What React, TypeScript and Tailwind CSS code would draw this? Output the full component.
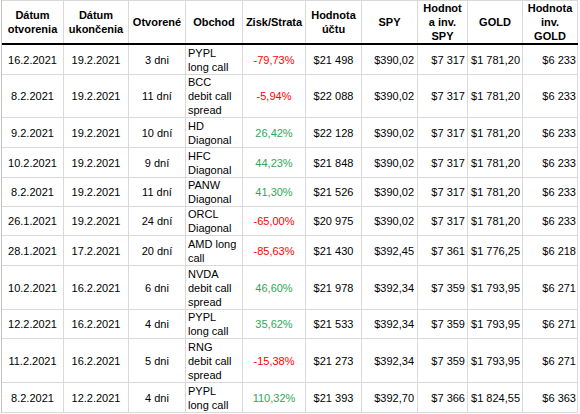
import React from "react"

type Row = {
  open: string
  close: string
  days: string
  trade: string[]
  pl: string
  account: string
  spy: string
  invSpy: string
  gold: string
  invGold: string
  h: string
}

// row heights measured off the sheet (border included)
const rows: Row[] = [
  { open: "16.2.2021", close: "19.2.2021", days: "3 dni", trade: ["PYPL", "long call"], pl: "-79,73%", account: "$21 498", spy: "$390,02", invSpy: "$7 317", gold: "$1 781,20", invGold: "$6 233", h: "h-[30px]" },
  { open: "8.2.2021", close: "19.2.2021", days: "11 dní", trade: ["BCC", "debit call", "spread"], pl: "-5,94%", account: "$22 088", spy: "$390,02", invSpy: "$7 317", gold: "$1 781,20", invGold: "$6 233", h: "h-[43px]" },
  { open: "9.2.2021", close: "19.2.2021", days: "10 dní", trade: ["HD", "Diagonal"], pl: "26,42%", account: "$22 128", spy: "$390,02", invSpy: "$7 317", gold: "$1 781,20", invGold: "$6 233", h: "h-[30px]" },
  { open: "10.2.2021", close: "19.2.2021", days: "9 dní", trade: ["HFC", "Diagonal"], pl: "44,23%", account: "$21 848", spy: "$390,02", invSpy: "$7 317", gold: "$1 781,20", invGold: "$6 233", h: "h-[30px]" },
  { open: "8.2.2021", close: "19.2.2021", days: "11 dní", trade: ["PANW", "Diagonal"], pl: "41,30%", account: "$21 526", spy: "$390,02", invSpy: "$7 317", gold: "$1 781,20", invGold: "$6 233", h: "h-[29px]" },
  { open: "26.1.2021", close: "19.2.2021", days: "24 dní", trade: ["ORCL", "Diagonal"], pl: "-65,00%", account: "$20 975", spy: "$390,02", invSpy: "$7 317", gold: "$1 781,20", invGold: "$6 233", h: "h-[29px]" },
  { open: "28.1.2021", close: "17.2.2021", days: "20 dní", trade: ["AMD long", "call"], pl: "-85,63%", account: "$21 430", spy: "$392,45", invSpy: "$7 361", gold: "$1 776,25", invGold: "$6 218", h: "h-[30px]" },
  { open: "10.2.2021", close: "16.2.2021", days: "6 dni", trade: ["NVDA", "debit call", "spread"], pl: "46,60%", account: "$21 978", spy: "$392,34", invSpy: "$7 359", gold: "$1 793,95", invGold: "$6 271", h: "h-[44px]" },
  { open: "12.2.2021", close: "16.2.2021", days: "4 dni", trade: ["PYPL", "long call"], pl: "35,62%", account: "$21 533", spy: "$392,34", invSpy: "$7 359", gold: "$1 793,95", invGold: "$6 271", h: "h-[29px]" },
  { open: "11.2.2021", close: "16.2.2021", days: "5 dni", trade: ["RNG", "debit call", "spread"], pl: "-15,38%", account: "$21 273", spy: "$392,34", invSpy: "$7 359", gold: "$1 793,95", invGold: "$6 271", h: "h-[44px]" },
  { open: "8.2.2021", close: "12.2.2021", days: "4 dni", trade: ["PYPL", "long call"], pl: "110,32%", account: "$21 393", spy: "$392,70", invSpy: "$7 366", gold: "$1 824,55", invGold: "$6 363", h: "h-[30px]" },
]

const headers: string[][] = [
  ["Dátum", "otvorenia"],
  ["Dátum", "ukončenia"],
  ["Otvorené"],
  ["Obchod"],
  ["Zisk/Strata"],
  ["Hodnota", "účtu"],
  ["SPY"],
  ["Hodnot", "a inv.", "SPY"],
  ["GOLD"],
  ["Hodnota", "inv.", "GOLD"],
]

const grid = "grid grid-cols-[62px_65px_57px_57px_63px_56px_56px_50px_55px_55px]"
const cell = "border-r border-[#d9d9d9] flex items-center"

export default function App() {
  return (
    <div className="w-[580px] h-[414px] overflow-hidden bg-white text-black text-[11px] leading-[14px] font-['Liberation_Sans',Arial,sans-serif]">
      <div className="ml-[1px] w-[577px] border-l border-[#c4c4c4]">
        <div className={`${grid} h-[45px] border-t border-[#d9d9d9] border-b-2 border-b-black font-bold`}>
          {headers.map((h, i) => (
            <div key={i} className={`${cell} justify-center text-center`}>
              <div>
                {h.map((line) => (
                  <div key={line}>{line}</div>
                ))}
              </div>
            </div>
          ))}
        </div>
        {rows.map((r, i) => (
          <div key={i} className={`${grid} ${r.h} border-b border-[#d9d9d9]`}>
            <div className={`${cell} justify-center`}>{r.open}</div>
            <div className={`${cell} justify-center`}>{r.close}</div>
            <div className={`${cell} justify-center`}>{r.days}</div>
            <div className={`${cell} pl-[2px]`}>
              <div>
                {r.trade.map((t) => (
                  <div key={t} className="whitespace-nowrap">{t}</div>
                ))}
              </div>
            </div>
            <div className={`${cell} justify-center ${r.pl.startsWith("-") ? "text-[#ff0000]" : "text-[#2ea857]"}`}>{r.pl}</div>
            <div className={`${cell} justify-center`}>{r.account}</div>
            <div className={`${cell} justify-end pr-[3px]`}>{r.spy}</div>
            <div className={`${cell} justify-end pr-[2px]`}>{r.invSpy}</div>
            <div className={`${cell} justify-end pr-[2px]`}>{r.gold}</div>
            <div className={`${cell} justify-end pr-[1px]`}>{r.invGold}</div>
          </div>
        ))}
      </div>
    </div>
  )
}
